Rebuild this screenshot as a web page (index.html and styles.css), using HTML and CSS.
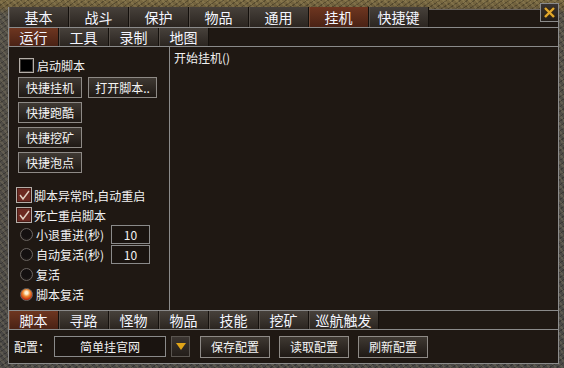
FILE: index.html
```html
<!DOCTYPE html>
<html>
  <head>
    <title>挂机</title>
    <link rel="stylesheet" href="styles.css">
  </head>
  <body>
    <div class="frame">
      <div class="window">
        <div class="tabs main-tabs">
          <div class="tab">基本</div>
          <div class="tab">战斗</div>
          <div class="tab">保护</div>
          <div class="tab">物品</div>
          <div class="tab">通用</div>
          <div class="tab active">挂机</div>
          <div class="tab">快捷键</div>
          <div class="filler"></div>
        </div>
        <div class="tabs sub-tabs">
          <div class="tab small active">运行</div>
          <div class="tab small">工具</div>
          <div class="tab small">录制</div>
          <div class="tab small">地图</div>
        </div>

        <div class="content">
          <div class="left">
            <label class="check first"><span class="box"></span>启动脚本</label>

            <div class="btn-row first-btns">
              <button class="btn">快捷挂机</button>
              <button class="btn wide">打开脚本..</button>
            </div>
            <div class="btn-row"><button class="btn">快捷跑酷</button></div>
            <div class="btn-row"><button class="btn">快捷挖矿</button></div>
            <div class="btn-row"><button class="btn">快捷泡点</button></div>

            <label class="check second"><span class="box checked">
              <svg width="14" height="14" viewBox="0 0 14 14"><path d="M3 7 L6 11 L12 3" fill="none" stroke="#e2d2c4" stroke-width="1.4"/></svg>
            </span>脚本异常时,自动重启</label>
            <label class="check third"><span class="box checked">
              <svg width="14" height="14" viewBox="0 0 14 14"><path d="M3 7 L6 11 L12 3" fill="none" stroke="#e2d2c4" stroke-width="1.4"/></svg>
            </span>死亡重启脚本</label>

            <div class="radio-row first-radio">
              <span class="radio"></span><span class="radio-label">小退重进(秒)</span>
              <span class="num">10</span>
            </div>
            <div class="radio-row">
              <span class="radio"></span><span class="radio-label">自动复活(秒)</span>
              <span class="num">10</span>
            </div>
            <div class="radio-row">
              <span class="radio"></span><span class="radio-label">复活</span>
            </div>
            <div class="radio-row">
              <span class="radio on"></span><span class="radio-label">脚本复活</span>
            </div>
          </div>
          <div class="log">开始挂机()</div>
        </div>

        <div class="tabs bottom-tabs">
          <div class="tab small active">脚本</div>
          <div class="tab small">寻路</div>
          <div class="tab small">怪物</div>
          <div class="tab small">物品</div>
          <div class="tab small">技能</div>
          <div class="tab small">挖矿</div>
          <div class="tab long">巡航触发</div>
        </div>

        <div class="config-bar">
          <span class="config-label">配置：</span>
          <div class="select">简单挂官网</div>
          <button class="drop">
            <svg width="10" height="7" viewBox="0 0 10 7"><path d="M0 0 H10 L5 7 Z" fill="#e0a418"/></svg>
          </button>
          <button class="btn cfg">保存配置</button>
          <button class="btn cfg">读取配置</button>
          <button class="btn cfg">刷新配置</button>
        </div>

        <button class="close">
          <svg width="13" height="13" viewBox="0 0 13 13">
            <path d="M2 2 L11 11 M11 2 L2 11" stroke="#3a2a10" stroke-width="4"/>
            <path d="M2 2 L11 11 M11 2 L2 11" stroke="#e2a82c" stroke-width="2.4"/>
          </svg>
        </button>
      </div>
    </div>
  </body>
</html>
```

FILE: styles.css
```css
body {
  margin: 0;
  font-family: "Noto Sans CJK SC", "Liberation Sans", sans-serif;
  font-size: 12px;
  color: #f2f2f2;
}
.frame {
  width: 564px;
  height: 368px;
  box-sizing: border-box;
  padding: 7px 5px 4px 8px;
  background-color: #4c4a46;
  background-image:
    repeating-linear-gradient(50deg, rgba(255, 235, 170, 0.1) 0 2px, transparent 2px 5px),
    repeating-linear-gradient(-35deg, rgba(0, 0, 0, 0.25) 0 1px, transparent 1px 4px),
    linear-gradient(#7a6a42 0, #6a5b3a 7px, #545048 14px, #4a4846 100%);
}
.window {
  position: relative;
  height: 100%;
  box-sizing: border-box;
  display: flex;
  flex-direction: column;
  border: 1px solid #8c8c8c;
  border-top: none;
}
.tabs {
  display: flex;
  background: #1f1813;
}
.main-tabs {
  height: 21px;
  box-sizing: border-box;
  border-bottom: 1px solid #8a8a8a;
  background: transparent;
}
.sub-tabs {
  height: 19px;
  box-sizing: border-box;
  border-bottom: 1px solid #8a8a8a;
}
.bottom-tabs {
  height: 20px;
  box-sizing: border-box;
  border-top: 1px solid #8a8a8a;
  border-bottom: 1px solid #8a8a8a;
}
.tab {
  width: 60px;
  box-sizing: border-box;
  display: flex;
  align-items: center;
  justify-content: center;
  font-size: 14px;
  color: #f4f6ff;
  background: linear-gradient(#47413b, #2b2520);
  border-right: 1px solid #14100c;
  box-shadow: inset 1px 0 #57504a;
}
.tab.small {
  width: 50px;
}
.tab.long {
  width: 70px;
}
.tab.active {
  background: linear-gradient(#6e3620, #4a2215);
  box-shadow: inset 1px 0 #7a4a34;
}
.filler {
  flex: 1;
  margin-top: 2px;
  background: #1f1813;
  border-top: 1px solid #6c6660;
}
.content {
  height: 263px;
  display: flex;
  background: #1f1813;
}
.left {
  width: 161px;
  box-sizing: border-box;
  border-right: 1px solid #8a8a8a;
  display: flex;
  flex-direction: column;
}
.log {
  flex: 1;
  padding: 3px 4px;
  line-height: 16px;
}
.check {
  display: flex;
  align-items: center;
  height: 16px;
  gap: 2px;
}
.check.first {
  margin: 10px 0 0 10px;
}
.check.second {
  margin: 14px 0 0 7px;
}
.check.third {
  margin: 4px 0 0 7px;
}
.box {
  width: 15px;
  height: 15px;
  box-sizing: border-box;
  border: 1px solid #b4aea8;
  background: #000;
  box-shadow: inset 0 0 0 1px #3a3632;
  display: flex;
  align-items: center;
  justify-content: center;
}
.check.first .box {
  margin-right: 1px;
}
.box.checked {
  width: 16px;
  height: 16px;
  background: #6c2a22;
  box-shadow: inset 0 0 0 1px #4a1c16;
}
.btn-row {
  display: flex;
  gap: 6px;
  margin: 4px 0 0 9px;
}
.btn {
  width: 64px;
  height: 21px;
  padding: 0;
  box-sizing: border-box;
  border: 1px solid #8e8a86;
  background: linear-gradient(#3f3933, #1f1915);
  color: #f4f4f4;
  font-family: inherit;
  font-size: 12px;
}
.btn.wide {
  width: 69px;
}
.radio-row {
  display: flex;
  align-items: center;
  height: 19px;
  margin: 1px 0 0 11px;
}
.radio-row.first-radio {
  margin-top: 2px;
}
.radio {
  width: 13px;
  height: 13px;
  box-sizing: border-box;
  border-radius: 50%;
  border: 1px solid #6a6460;
  background: radial-gradient(circle at 50% 40%, #141010 0 50%, #2e2824 100%);
  margin-right: 3px;
}
.radio.on {
  background: radial-gradient(circle at 50% 35%, #fff0d0 0 15%, #f08a30 40%, #c02a10 75%, #5a1a10 100%);
}
.radio-label {
  width: 75px;
}
.num {
  width: 39px;
  height: 19px;
  box-sizing: border-box;
  border: 1px solid #8a8a8a;
  background: #1a1410;
  display: flex;
  align-items: center;
  justify-content: center;
}
.config-bar {
  flex: 1;
  display: flex;
  align-items: center;
  padding-left: 5px;
  background: #1f1813;
}
.config-label {
  width: 40px;
}
.select {
  width: 112px;
  height: 21px;
  box-sizing: border-box;
  border: 1px solid #8a8a8a;
  background: #1a1410;
  display: flex;
  align-items: center;
  justify-content: center;
}
.drop {
  width: 19px;
  height: 21px;
  margin-left: 5px;
  padding: 0;
  box-sizing: border-box;
  border: 1px solid #5a5550;
  background: linear-gradient(#3a3430, #241e1a);
  display: flex;
  align-items: center;
  justify-content: center;
}
.btn.cfg {
  width: 70px;
  height: 22px;
  margin-left: 9px;
}
.drop + .btn.cfg {
  margin-left: 10px;
}
.close {
  position: absolute;
  left: 531px;
  top: -4px;
  width: 19px;
  height: 19px;
  padding: 0;
  box-sizing: border-box;
  border: 1px solid #8a8a8a;
  background: linear-gradient(#3a3430, #221c18);
  display: flex;
  align-items: center;
  justify-content: center;
}
```
